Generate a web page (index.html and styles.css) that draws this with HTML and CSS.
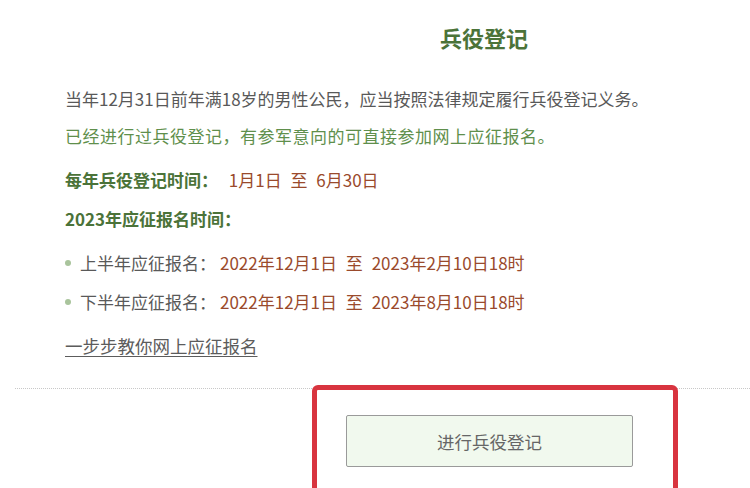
FILE: index.html
```html
<!DOCTYPE html>
<html lang="zh-CN">
<head>
    <meta charset="UTF-8">
    <meta name="viewport" content="width=device-width, initial-scale=1.0">
    <title>兵役登记</title>
    <link rel="stylesheet" href="styles.css">
</head>
<body>
    <div class="page">
        <h1 class="title">兵役登记</h1>
        <div class="content">
            <p class="line plain l1">当年12月31日前年满18岁的男性公民，应当按照法律规定履行兵役登记义务。</p>
            <p class="line green l2">已经进行过兵役登记，有参军意向的可直接参加网上应征报名。</p>
            <p class="line l3"><span class="label">每年兵役登记时间：</span> <span class="date first">1月1日 至 6月30日</span></p>
            <p class="line l4"><span class="label">2023年应征报名时间：</span></p>
            <p class="line item l5"><span class="dot"></span><span class="plain">上半年应征报名：</span><span class="date">2022年12月1日 至 2023年2月10日18时</span></p>
            <p class="line item l6"><span class="dot"></span><span class="plain">下半年应征报名：</span><span class="date">2022年12月1日 至 2023年8月10日18时</span></p>
            <p class="line l7"><a class="guide" href="#">一步步教你网上应征报名</a></p>
        </div>
        <div class="footer">
            <button class="register">进行兵役登记</button>
        </div>
        <div class="mark"></div>
    </div>
</body>
</html>
```

FILE: styles.css
```css
body {
    margin: 0;
    padding: 0;
    background: #fff;
    font-family: "Noto Sans CJK SC", "Noto Sans", sans-serif;
    overflow: hidden;
}

.page {
    position: relative;
    width: 750px;
    height: 488px;
    overflow: hidden;
}

.title {
    margin: 0;
    padding: 22px 0 0 440px;
    font-size: 22px;
    line-height: 30px;
    font-weight: bold;
    color: #4b7339;
}

.content {
    padding-left: 65px;
}

.line {
    margin: 0;
    font-size: 17px;
    line-height: 24px;
    white-space: nowrap;
}

.l1 { margin-top: 35px; }
.l2 { margin-top: 13px; letter-spacing: 0.5px; }
.l3 { margin-top: 20px; }
.l4 { margin-top: 15px; }
.l5 { margin-top: 20px; }
.l6 { margin-top: 15px; }
.l7 { margin-top: 20px; font-size: 17.5px; }

.plain {
    color: #595959;
}

.green {
    color: #5f8f4c;
}

.label {
    font-weight: bold;
    color: #4b7339;
}

.date {
    color: #9a4a2c;
    margin-left: 4px;
    word-spacing: 5px;
}

.date.first {
    margin-left: 7px;
}

.item {
    display: flex;
    align-items: center;
}

.dot {
    width: 6px;
    height: 6px;
    border-radius: 50%;
    background: #a9c49c;
    margin: 0 9px 0 0;
}

.guide {
    color: #5c5c5c;
    text-decoration: underline;
    text-underline-offset: 3px;
}

.footer {
    margin: 30px 0 0 15px;
    border-top: 1px dotted #c8c8c8;
    padding: 26px 0 0 331px;
}

.register {
    width: 287px;
    height: 52px;
    background: #f1f9ee;
    border: 1px solid #9a9a9a;
    border-radius: 2px;
    font-family: inherit;
    font-size: 17.5px;
    color: #666;
}

.mark {
    position: absolute;
    left: 312px;
    top: 385px;
    width: 356px;
    height: 120px;
    border: 5px solid #d8343f;
    border-radius: 6px;
}
```
